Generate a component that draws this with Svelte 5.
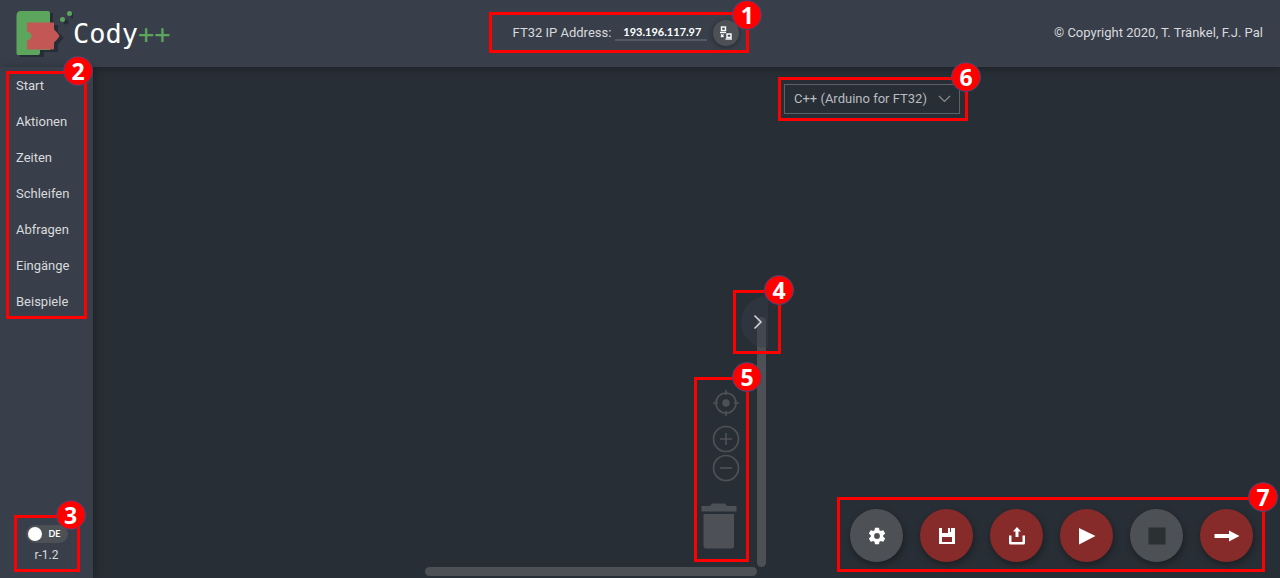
<script>
  const categories = ['Start', 'Aktionen', 'Zeiten', 'Schleifen', 'Abfragen', 'Eingänge', 'Beispiele'];
  let address = $state('193.196.117.97');
  let german = $state(false);
  let language = $state('cpp');
</script>

<div class="app">
  <header>
    <div class="logo">
      <svg width="57" height="54" viewBox="0 0 57 54" aria-hidden="true">
        <g fill="#262d37" transform="translate(4 2)">
          <path d="M4 5H33V17H38V24L44 30L38 36V44H24V49H0V9Z" />
          <circle cx="46" cy="14" r="2.500" /><circle cx="53" cy="8" r="2.500" />
        </g>
        <path fill="#5ba65c" d="M5 5H32Q34 5 34 7V44H24V47Q24 49 22 49H2Q.5 49 .5 47V10Q.5 5 5 5Z" />
        <path fill="#c35756" d="M12 16.500H37Q38 16.500 38 17.500V22C38 24.500 39.500 24.500 41 26.500L43 29Q43.500 30 43 31L41 33.500C39.500 35.500 38 35.500 38 38V42.500Q38 43.500 37 43.500H12Q11 43.500 11 42.500V35.500C11 34 13 34 14.500 32.500Q16.500 30 14.500 27.500C13 26 11 26 11 24.500V17.500Q11 16.500 12 16.500Z" />
        <circle cx="46.500" cy="13.500" r="2.500" fill="#5ba65c" /><circle cx="53.500" cy="7.500" r="2.500" fill="#5ba65c" />
      </svg>
      <span class="brand">Cody<span class="plus">++</span></span>
    </div>

    <div class="callout address">
      <label for="ip">FT32 IP Address:</label>
      <input id="ip" type="text" bind:value={address} />
      <button class="connect" aria-label="Connect">
        <svg width="14" height="14" viewBox="0 0 14 14" fill="none" stroke="#fff">
          <rect x="2.500" y="1" width="4" height="3.500" stroke-width="1.400" /><path d="M1 6.500H7" stroke-width="1.400" />
          <rect x="8" y="8" width="4" height="3.500" stroke-width="1.400" /><path d="M6.500 13H13" stroke-width="1.400" />
          <path d="M2 8.500L4.500 11M4.500 8.500L2 11" stroke-width="1.100" />
        </svg>
      </button>
      <span class="badge low">1</span>
    </div>

    <span class="copyright">© Copyright 2020, T. Tränkel, F.J. Pal</span>
  </header>

  <main>
    <aside>
      <nav class="callout">
        {#each categories as category}
          <a href="#{category}">{category}</a>
        {/each}
        <span class="badge inset">2</span>
      </nav>
      <div class="callout settings">
        <label class="toggle"><input type="checkbox" bind:checked={german} /><span>DE</span></label>
        <span class="version">r-1.2</span>
        <span class="badge inset">3</span>
      </div>
    </aside>

    <section class="workspace">
      <div class="callout controls">
        <button aria-label="Center">
          <svg width="28" height="28" viewBox="0 0 28 28" fill="none" stroke="#4d5156" stroke-width="1.700">
            <circle cx="14" cy="14" r="10" /><circle cx="14" cy="14" r="3.700" fill="#4d5156" stroke="none" />
            <path d="M14 1V6M14 22V27M1 14H6M22 14H27" />
          </svg>
        </button>
        <button class="zoom-in" aria-label="Zoom in">
          <svg width="28" height="28" viewBox="0 0 28 28" fill="none" stroke="#4d5156" stroke-width="1.700">
            <circle cx="14" cy="14" r="12.500" /><path d="M14 8V20M8 14H20" />
          </svg>
        </button>
        <button aria-label="Zoom out">
          <svg width="28" height="28" viewBox="0 0 28 28" fill="none" stroke="#4d5156" stroke-width="1.700">
            <circle cx="14" cy="14" r="12.500" /><path d="M8 14H20" />
          </svg>
        </button>
        <button class="trash" aria-label="Trash">
          <svg width="36" height="46" viewBox="0 0 36 46" fill="#4d5156">
            <path d="M.5 3H9L11 .500H24L26 3H35.500V8.500H.5Z" /><path d="M2.500 11H33V43Q33 45.500 30.500 45.500H5Q2.500 45.500 2.500 43Z" />
          </svg>
        </button>
        <span class="badge">5</span>
      </div>
      <div class="bar vertical"></div>
      <div class="bar horizontal"></div>
      <div class="callout divider">
        <button aria-label="Collapse code panel">
          <svg width="10" height="16" viewBox="0 0 10 16" fill="none" stroke="#d5d7da" stroke-width="1.500"><path d="M1.500 1.500L8 8L1.500 14.500" /></svg>
        </button>
        <span class="badge">4</span>
      </div>
    </section>

    <section class="code">
      <div class="callout language">
        <select aria-label="Language" bind:value={language}>
          <option value="cpp">C++ (Arduino for FT32)</option>
        </select>
        <svg width="13" height="8" viewBox="0 0 13 8" fill="none" stroke="#888c91" stroke-width="1.200"><path d="M1 1L6.500 6.500L12 1" /></svg>
        <span class="badge">6</span>
      </div>

      <div class="callout actions">
        <button class="grey" aria-label="Settings">
          <svg width="20" height="20" viewBox="0 0 24 24" fill="#fff"><path d="M19.430 12.980c.04-.32.07-.64.07-.98s-.03-.66-.07-.98l2.110-1.650c.19-.15.24-.42.12-.64l-2-3.460c-.12-.22-.39-.3-.61-.22l-2.490 1c-.52-.4-1.080-.73-1.690-.98l-.38-2.650C14.460 2.180 14.250 2 14 2h-4c-.25 0-.46.18-.49.42l-.38 2.650c-.61.25-1.170.59-1.690.98l-2.490-1c-.23-.09-.49 0-.61.22l-2 3.460c-.13.22-.07.49.12.64l2.110 1.650c-.04.32-.07.65-.07.98s.03.66.07.98l-2.110 1.650c-.19.15-.24.42-.12.64l2 3.460c.12.22.39.3.61.22l2.490-1c.52.4 1.080.73 1.690.98l.38 2.650c.03.24.24.42.49.42h4c.25 0 .46-.18.49-.42l.38-2.650c.61-.25 1.170-.59 1.690-.98l2.490 1c.23.09.49 0 .61-.22l2-3.460c.12-.22.07-.49-.12-.64l-2.110-1.650zM12 15.500A3.500 3.500 0 1 1 12 8.500A3.500 3.500 0 0 1 12 15.500z" /></svg>
        </button>
        <button aria-label="Save">
          <svg width="18" height="18" viewBox="0 0 18 18" fill="#fff" fill-rule="evenodd"><path d="M1 1H4V6H10V1H12V5H13V1H17V17H1ZM4 10V15H14V10Z" /></svg>
        </button>
        <button aria-label="Upload">
          <svg width="18" height="18" viewBox="0 0 18 18" fill="#fff"><path d="M9 0L13 4.500H10.500V10H7.500V4.500H5Z" /><path d="M1 8.500H3.500V15H14.500V8.500H17V16Q17 17.500 15.500 17.500H2.500Q1 17.500 1 16Z" /></svg>
        </button>
        <button aria-label="Run">
          <svg width="18" height="18" viewBox="0 0 18 18" fill="#fff"><path d="M1 1L17.500 9L1 17.500Z" /></svg>
        </button>
        <button class="grey" aria-label="Stop">
          <svg width="18" height="18" viewBox="0 0 18 18"><path fill="#2b3033" d="M.5 .5H17.500V17.500H.5Z" /></svg>
        </button>
        <button aria-label="Next">
          <svg width="26" height="14" viewBox="0 0 26 14" fill="#fff"><path d="M.5 5H15V1.500L25.500 7L15 12.500V9H.5Z" /></svg>
        </button>
        <span class="badge">7</span>
      </div>
    </section>
  </main>
</div>

<style>
  :global(body) { margin: 0; background: #282e35; }
  * { box-sizing: border-box; }
  .app {
    display: flex;
    flex-direction: column;
    min-height: 100vh;
    overflow: hidden;
    background: #282e35;
    color: #d8dadd;
    font: 400 13px/20px Roboto, sans-serif;
  }
  button { padding: 0; border: 0; background: none; cursor: pointer; }
  svg { display: block; }

  .callout { position: relative; border: 3px solid #f00; }
  .badge {
    position: absolute;
    top: -18px;
    right: -16px;
    z-index: 3;
    width: 30px;
    height: 30px;
    border: 1px solid #41497c;
    border-radius: 50%;
    background: #f00;
    color: #fff;
    font: 700 23px/28px "Open Sans", sans-serif;
    text-align: center;
  }
  .badge.low { top: -15px; }
  .badge.inset { right: -9px; }

  header {
    position: relative;
    z-index: 2;
    display: flex;
    justify-content: space-between;
    align-items: center;
    height: 67px;
    padding: 0 17px 2px 16px;
    background: #383f4a;
    box-shadow: 0 2px 8px rgba(0, 0, 0, 0.25);
  }
  .logo { display: flex; align-items: center; width: 168px; }
  .logo svg { flex: none; }
  .brand { padding-top: 3px; color: #fff; font: 27px/32px "DejaVu Sans Mono", monospace; }
  .plus { color: #5ba65c; }
  .address { display: flex; align-items: center; height: 41px; padding: 0 7px 0 21px; }
  .address input {
    width: 92px;
    height: 16px;
    margin: 0 6px 0 4px;
    padding: 0 0 0 8px;
    border: 0;
    border-bottom: 2px solid #555a62;
    background: none;
    color: #fff;
    font: 700 11px/14px Lato, sans-serif;
  }
  .connect {
    display: grid;
    place-items: center;
    width: 26px;
    height: 26px;
    border-radius: 50%;
    background: #4d5156;
    box-shadow: 0 1px 5px rgba(0, 0, 0, 0.35);
  }

  main { display: flex; flex: 1; }
  aside {
    z-index: 2;
    display: flex;
    flex-direction: column;
    justify-content: space-between;
    width: 93px;
    padding: 4px 6px 6px;
    background: #383f4a;
    box-shadow: 2px 0 8px rgba(0, 0, 0, 0.25);
  }
  nav { display: flex; flex-direction: column; gap: 16px; padding: 2px 7px 4px; }
  nav a { color: inherit; text-decoration: none; }
  .settings {
    display: flex;
    flex-direction: column;
    align-items: center;
    gap: 4px;
    align-self: center;
    width: 66px;
    padding: 7px 0 6px;
    font-size: 12px;
  }
  .toggle {
    display: flex;
    align-items: center;
    gap: 7px;
    width: 42px;
    height: 18px;
    padding: 0 2px;
    border-radius: 9px;
    background: #4d5156;
    color: #fff;
    font: 700 9px/18px Lato, sans-serif;
  }
  .toggle input { appearance: none; width: 14px; height: 14px; margin: 0; border-radius: 50%; background: #fff; }
  .version { line-height: 16px; }

  .workspace {
    position: relative;
    display: grid;
    grid-template: 1fr 9px / 1fr 9px;
    flex: 1;
    padding: 0 2px 2px 0;
  }
  .controls {
    display: flex;
    flex-direction: column;
    align-items: flex-end;
    align-self: end;
    justify-self: end;
    width: 55px;
    margin: 0 8px 5px 0;
    padding: 9px 6px 10px 4px;
  }
  .zoom-in { margin: 8px 0 1px; }
  .trash { align-self: flex-start; margin-top: 21px; }
  .bar { border-radius: 5px; background: #4d5156; }
  .vertical { align-self: end; height: 50%; }
  .horizontal { justify-self: end; width: 50%; }
  .divider {
    position: absolute;
    top: calc(50% - 33px);
    right: -13px;
    width: 48px;
    height: 64px;
    padding: 3px 5px;
  }
  .divider button {
    display: grid;
    place-items: center;
    padding-left: 6px;
    width: 27px;
    height: 52px;
    border-radius: 26px 0 0 26px;
    background: rgba(56, 63, 74, 0.45);
  }

  .code {
    display: flex;
    flex-direction: column;
    justify-content: space-between;
    width: 40%;
    padding: 10px 15px 6px 10px;
  }
  .language { display: grid; align-items: center; align-self: flex-start; width: 190px; padding: 4px 5px 4px 3px; }
  .language select, .language svg { grid-area: 1 / 1; }
  .language svg { justify-self: end; margin-right: 9px; pointer-events: none; }
  select {
    appearance: none;
    width: 100%;
    height: 30px;
    padding: 0 9px;
    border: 1px solid #5c6167;
    border-radius: 0;
    background: transparent;
    color: #b9bcc0;
    font: inherit;
  }
  .actions { display: flex; gap: 17px; align-self: flex-end; padding: 9px 9px 7px 10px; }
  .actions button {
    display: grid;
    place-items: center;
    width: 53px;
    height: 53px;
    border-radius: 50%;
    background: #872a2a;
    box-shadow: 1px 3px 7px rgba(0, 0, 0, 0.35);
  }
  .actions .grey { background: #4d5156; }
</style>
